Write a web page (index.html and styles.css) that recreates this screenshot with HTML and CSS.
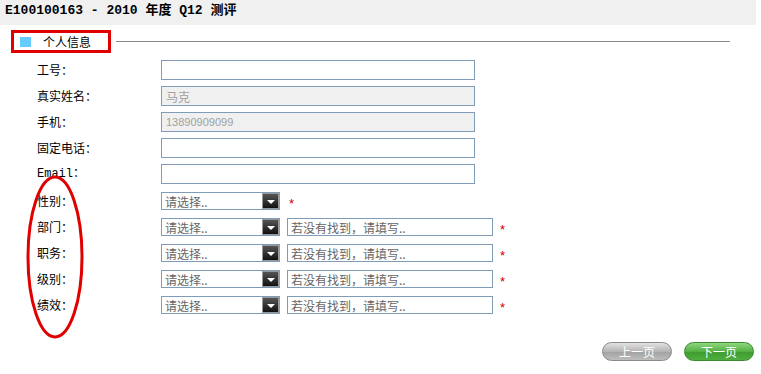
FILE: index.html
```html
<!DOCTYPE html>
<html lang="zh-CN">
<head>
    <meta charset="UTF-8">
    <title>E100100163 - 2010 年度 Q12 测评</title>
    <link rel="stylesheet" href="styles.css">
</head>
<body>

<div class="header">
    <h1 class="title">E100100163 - 2010 年度 Q12 测评</h1>
</div>

<div class="section-head">
    <div class="legend">
        <span class="legend-mark"></span>
        <span class="legend-text">个人信息</span>
    </div>
    <div class="legend-line"></div>
</div>

<form class="form">
    <div class="row">
        <label class="label">工号：</label>
        <input class="field" type="text">
    </div>
    <div class="row">
        <label class="label">真实姓名：</label>
        <input class="field" type="text" value="马克" disabled>
    </div>
    <div class="row">
        <label class="label">手机：</label>
        <input class="field field-num" type="text" value="13890909099" disabled>
    </div>
    <div class="row">
        <label class="label">固定电话：</label>
        <input class="field" type="text">
    </div>
    <div class="row">
        <label class="label label-en">Email：</label>
        <input class="field" type="text">
    </div>

    <div class="row row-pick">
        <label class="label">性别：</label>
        <div class="pick"><span>请选择..</span><span class="pick-btn"></span></div>
        <span class="req req-near">*</span>
    </div>
    <div class="row row-pick">
        <label class="label">部门：</label>
        <div class="pick"><span>请选择..</span><span class="pick-btn"></span></div>
        <input class="other" type="text" placeholder="若没有找到，请填写..">
        <span class="req">*</span>
    </div>
    <div class="row row-pick">
        <label class="label">职务：</label>
        <div class="pick"><span>请选择..</span><span class="pick-btn"></span></div>
        <input class="other" type="text" placeholder="若没有找到，请填写..">
        <span class="req">*</span>
    </div>
    <div class="row row-pick">
        <label class="label">级别：</label>
        <div class="pick"><span>请选择..</span><span class="pick-btn"></span></div>
        <input class="other" type="text" placeholder="若没有找到，请填写..">
        <span class="req">*</span>
    </div>
    <div class="row row-pick">
        <label class="label">绩效：</label>
        <div class="pick"><span>请选择..</span><span class="pick-btn"></span></div>
        <input class="other" type="text" placeholder="若没有找到，请填写..">
        <span class="req">*</span>
    </div>

    <div class="actions">
        <button type="button" class="btn btn-prev">上一页</button>
        <button type="button" class="btn btn-next">下一页</button>
    </div>
</form>

<!-- hand-drawn red ring marking the select labels -->
<svg class="ring" width="62" height="166" viewBox="0 0 62 166">
    <ellipse cx="30" cy="83" rx="27" ry="80" fill="none" stroke="#e00000" stroke-width="3"/>
</svg>

</body>
</html>
```

FILE: styles.css
```css
body {
    margin: 0;
    font-family: "Noto Sans CJK SC", "Liberation Sans", sans-serif;
    font-size: 12px;
    color: #000;
    background: #fff;
}
.header {
    width: 756px;
    height: 25px;
    background: #f0f0f0;
}
.title {
    margin: 0;
    padding-left: 5px;
    font-family: "Liberation Mono", "Noto Sans CJK SC", monospace;
    font-size: 13px;
    font-weight: bold;
    line-height: 22px;
}
.section-head {
    display: flex;
    align-items: center;
    margin-top: 5px;
}
.legend {
    display: flex;
    align-items: center;
    box-sizing: border-box;
    width: 100px;
    height: 23px;
    margin-left: 11px;
    border: 3px solid #e00000;
}
.legend-mark {
    width: 11px;
    height: 10px;
    margin-left: 6px;
    background: #66ccff;
}
.legend-text {
    margin-left: 12px;
    line-height: 17px;
}
.legend-line {
    flex: 1;
    height: 0;
    margin: 0 31px 0 5px;
    border-top: 1px solid #888;
}
.form {
    margin: 7px 0 0 0;
}
.row {
    display: flex;
    align-items: center;
    height: 20px;
    margin-bottom: 6px;
    padding-left: 37px;
}
.row-pick {
    height: 22px;
    margin-bottom: 4px;
}
.label {
    width: 124px;
    line-height: 20px;
}
.label-en {
    font-family: "Liberation Mono", monospace;
    font-size: 12px;
}
.field {
    box-sizing: border-box;
    width: 314px;
    height: 20px;
    margin: 0;
    padding: 0 4px;
    border: 1px solid #7f9db9;
    background: #fff;
    font-family: inherit;
    font-size: 12px;
}
.field:disabled {
    background: #f0f0f0;
    color: #a0a0a0;
}
.field-num {
    font-family: "Liberation Sans", sans-serif;
    font-size: 11px;
}
.pick {
    display: flex;
    align-items: center;
    justify-content: space-between;
    box-sizing: border-box;
    width: 119px;
    height: 18px;
    padding-left: 3px;
    border: 1px solid #7f9db9;
    color: #666;
}
.pick-btn {
    position: relative;
    box-sizing: border-box;
    width: 17px;
    height: 16px;
    border: 1px solid #999;
    background: linear-gradient(#555, #111);
}
.pick-btn::after {
    content: "";
    position: absolute;
    left: 4px;
    top: 6px;
    border-left: 4px solid transparent;
    border-right: 4px solid transparent;
    border-top: 4px solid #fff;
}
.other {
    box-sizing: border-box;
    width: 206px;
    height: 18px;
    margin: 0 0 0 7px;
    padding: 0 3px;
    border: 1px solid #7f9db9;
    font-family: inherit;
    font-size: 12px;
}
.other::placeholder {
    color: #666;
}
.req {
    margin-left: 7px;
    padding-top: 5px;
    color: #cc0000;
    font-family: "Liberation Sans", sans-serif;
    font-size: 13px;
}
.req-near {
    margin-left: 9px;
}
.actions {
    display: flex;
    justify-content: flex-end;
    gap: 12px;
    margin-top: 26px;
    padding-right: 7px;
}
.btn {
    width: 70px;
    height: 19px;
    padding: 0;
    border-radius: 10px;
    color: #fff;
    font-family: inherit;
    font-size: 12px;
    line-height: 17px;
    cursor: pointer;
}
.btn-prev {
    border: 1px solid #8a8a8a;
    background: linear-gradient(#e2e2e2, #b4b4b4 50%, #a2a2a2 52%, #bdbdbd);
}
.btn-next {
    border: 1px solid #3a8a2e;
    background: linear-gradient(#8fd67f, #53b043 50%, #3e9c30 52%, #4fae3f);
}
.ring {
    position: absolute;
    left: 25px;
    top: 174px;
}
```
